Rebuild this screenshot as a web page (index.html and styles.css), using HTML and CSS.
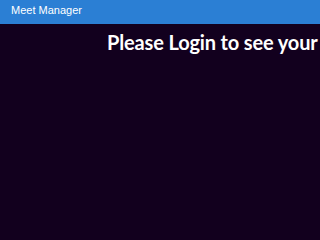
FILE: index.html
```html
<!DOCTYPE html>
<html>
<head>
<meta charset="utf-8">
<link rel="stylesheet" href="styles.css">
</head>
<body>
<header class="topbar"><span class="brand">Meet Manager</span></header>
<main class="content">
<h1 class="title">Please Login to see your</h1>
</main>
</body>
</html>
```
FILE: styles.css
```css
html, body {
  margin: 0;
  padding: 0;
  width: 320px;
  height: 240px;
  overflow: hidden;
  background: #12001e;
}
.topbar {
  height: 24px;
  background: #2b7fd4;
  display: flex;
  align-items: center;
  padding-left: 11px;
}
.brand {
  font-family: "Liberation Sans", Arial, sans-serif;
  font-size: 11px;
  color: #ffffff;
  margin-top: -4px;
}
.content {
  padding-left: 107px;
  white-space: nowrap;
}
.title {
  display: inline-block;
  margin: 4px 0 0 0;
  font-family: Lato, sans-serif;
  font-weight: 700;
  font-size: 20px;
  letter-spacing: -0.15px;
  line-height: 28px;
  color: #ffffff;
}
```
